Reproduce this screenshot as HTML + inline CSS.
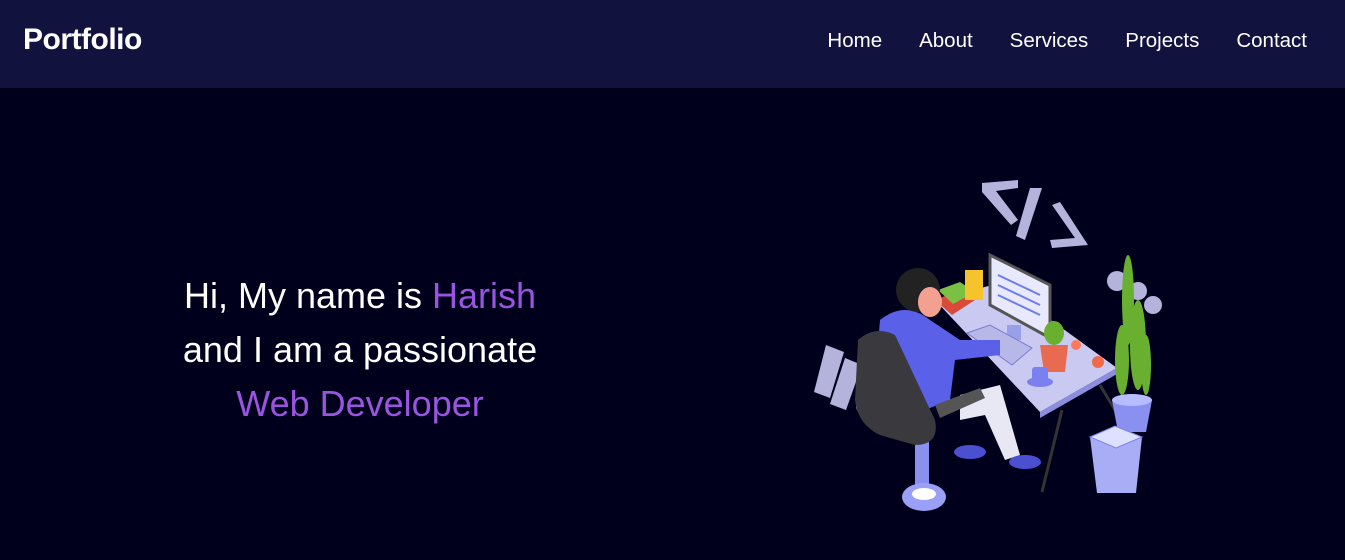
<!DOCTYPE html>
<html><head><meta charset="utf-8"><style>
*{margin:0;padding:0;box-sizing:border-box}
body{width:1345px;height:560px;background:#00001c;font-family:"Liberation Sans",sans-serif;overflow:hidden;position:relative}
header{height:88px;background:#12123f;position:relative}
.logo{position:absolute;left:23px;top:23px;color:#fff;font-weight:bold;font-size:30px;letter-spacing:-0.5px}
nav{position:absolute;top:29px;right:38px;display:flex;gap:37px;color:#fff;font-size:20.5px}
.hero{position:absolute;left:110px;width:500px;top:269px;text-align:center;color:#fff;font-size:36px;line-height:54px}
.p{color:#9a55e0}
svg{position:absolute;left:0;top:0}
</style></head><body>
<header><div class="logo">Portfolio</div>
<nav><span>Home</span><span>About</span><span>Services</span><span>Projects</span><span>Contact</span></nav></header>
<div class="hero">Hi, My name is <span class="p">Harish</span><br>and I am a passionate<br><span class="p">Web Developer</span></div>
<svg width="1345" height="560">
<g fill="#b3b3dc">
<polygon points="982,183 1018,180 1018,188 996,191 1018,220 1011,225 982,192"/>
<polygon points="1030,188 1042,188 1025,240 1016,236"/>
<polygon points="1052,205 1060,202 1088,245 1052,248 1050,240 1075,238"/>
<polygon points="826,345 844,352 830,398 814,392"/>
<polygon points="845,358 862,365 846,410 830,404"/>
<circle cx="1117" cy="281" r="10"/><circle cx="1138" cy="291" r="9"/><circle cx="1153" cy="305" r="9"/>
<circle cx="864" cy="406" r="8"/>
</g>
<polygon points="935,300 1000,283 1117,368 1040,412" fill="#c9c9f2"/>
<polygon points="1040,412 1117,368 1117,374 1040,418" fill="#8d8de0"/>
<line x1="1062" y1="410" x2="1042" y2="492" stroke="#333" stroke-width="3"/>
<line x1="1100" y1="385" x2="1127" y2="430" stroke="#333" stroke-width="3"/>
<polygon points="990,255 1050,285 1050,338 990,305" fill="#e8e8ff" stroke="#555" stroke-width="3"/>
<rect x="1007" y="325" width="14" height="15" fill="#9aa0e8"/>
<g stroke="#6a7cf0" stroke-width="2"><line x1="998" y1="275" x2="1040" y2="295"/><line x1="998" y1="285" x2="1040" y2="305"/><line x1="998" y1="295" x2="1040" y2="315"/></g>
<polygon points="967,333 990,325 1032,348 1012,365" fill="#b8b8e8" stroke="#7a7ad0"/>
<polygon points="935,300 960,290 975,300 952,315" fill="#d84a3a"/>
<polygon points="938,290 960,282 975,292 953,304" fill="#7ac043"/>
<rect x="965" y="270" width="18" height="30" fill="#f5c32c"/>
<polygon points="1040,345 1068,345 1065,372 1044,372" fill="#e86a50"/>
<ellipse cx="1054" cy="333" rx="10" ry="12" fill="#6ab030"/>
<circle cx="1076" cy="345" r="5" fill="#ff7a5a"/><circle cx="1098" cy="362" r="6" fill="#f06a4a"/>
<ellipse cx="1040" cy="382" rx="13" ry="5" fill="#7a80f0"/><rect x="1032" y="367" width="16" height="14" rx="3" fill="#7a80f0"/>
<polygon points="1112,400 1152,400 1146,432 1118,432" fill="#8a90f0"/>
<ellipse cx="1132" cy="400" rx="20" ry="6" fill="#b7bbff"/>
<g fill="#6ab030"><ellipse cx="1128" cy="300" rx="6" ry="45"/><ellipse cx="1138" cy="345" rx="8" ry="45"/><ellipse cx="1122" cy="360" rx="7" ry="35"/><ellipse cx="1146" cy="365" rx="5" ry="30"/></g>
<polygon points="1090,437 1142,437 1136,493 1097,493" fill="#a9adf5"/>
<polygon points="1090,437 1115,426 1142,437 1116,448" fill="#dde0ff" stroke="#7a80f0"/>
<rect x="915" y="440" width="14" height="45" fill="#8a90f0"/>
<ellipse cx="924" cy="497" rx="22" ry="14" fill="#9aa0f5"/>
<ellipse cx="924" cy="494" rx="12" ry="6" fill="#fff"/>
<polygon points="960,395 1000,385 1020,455 1005,460 985,415 960,420" fill="#e8e8f5"/>
<ellipse cx="970" cy="452" rx="16" ry="7" fill="#4a50d0"/><ellipse cx="1025" cy="462" rx="16" ry="7" fill="#4a50d0"/>
<path d="M880,320 Q905,300 930,320 L960,340 L1000,340 L1000,355 L955,360 L950,400 L900,420 L875,380 Z" fill="#5a60e8"/>
<circle cx="918" cy="290" r="22" fill="#222"/>
<ellipse cx="930" cy="302" rx="12" ry="15" fill="#f4a090"/>
<path d="M858,340 Q875,325 895,335 L935,420 Q940,445 915,445 L880,435 Q858,425 855,400 Z" fill="#3a3a3e"/>
<polygon points="935,405 980,388 985,398 940,418" fill="#555"/>
</svg>
</body></html>
